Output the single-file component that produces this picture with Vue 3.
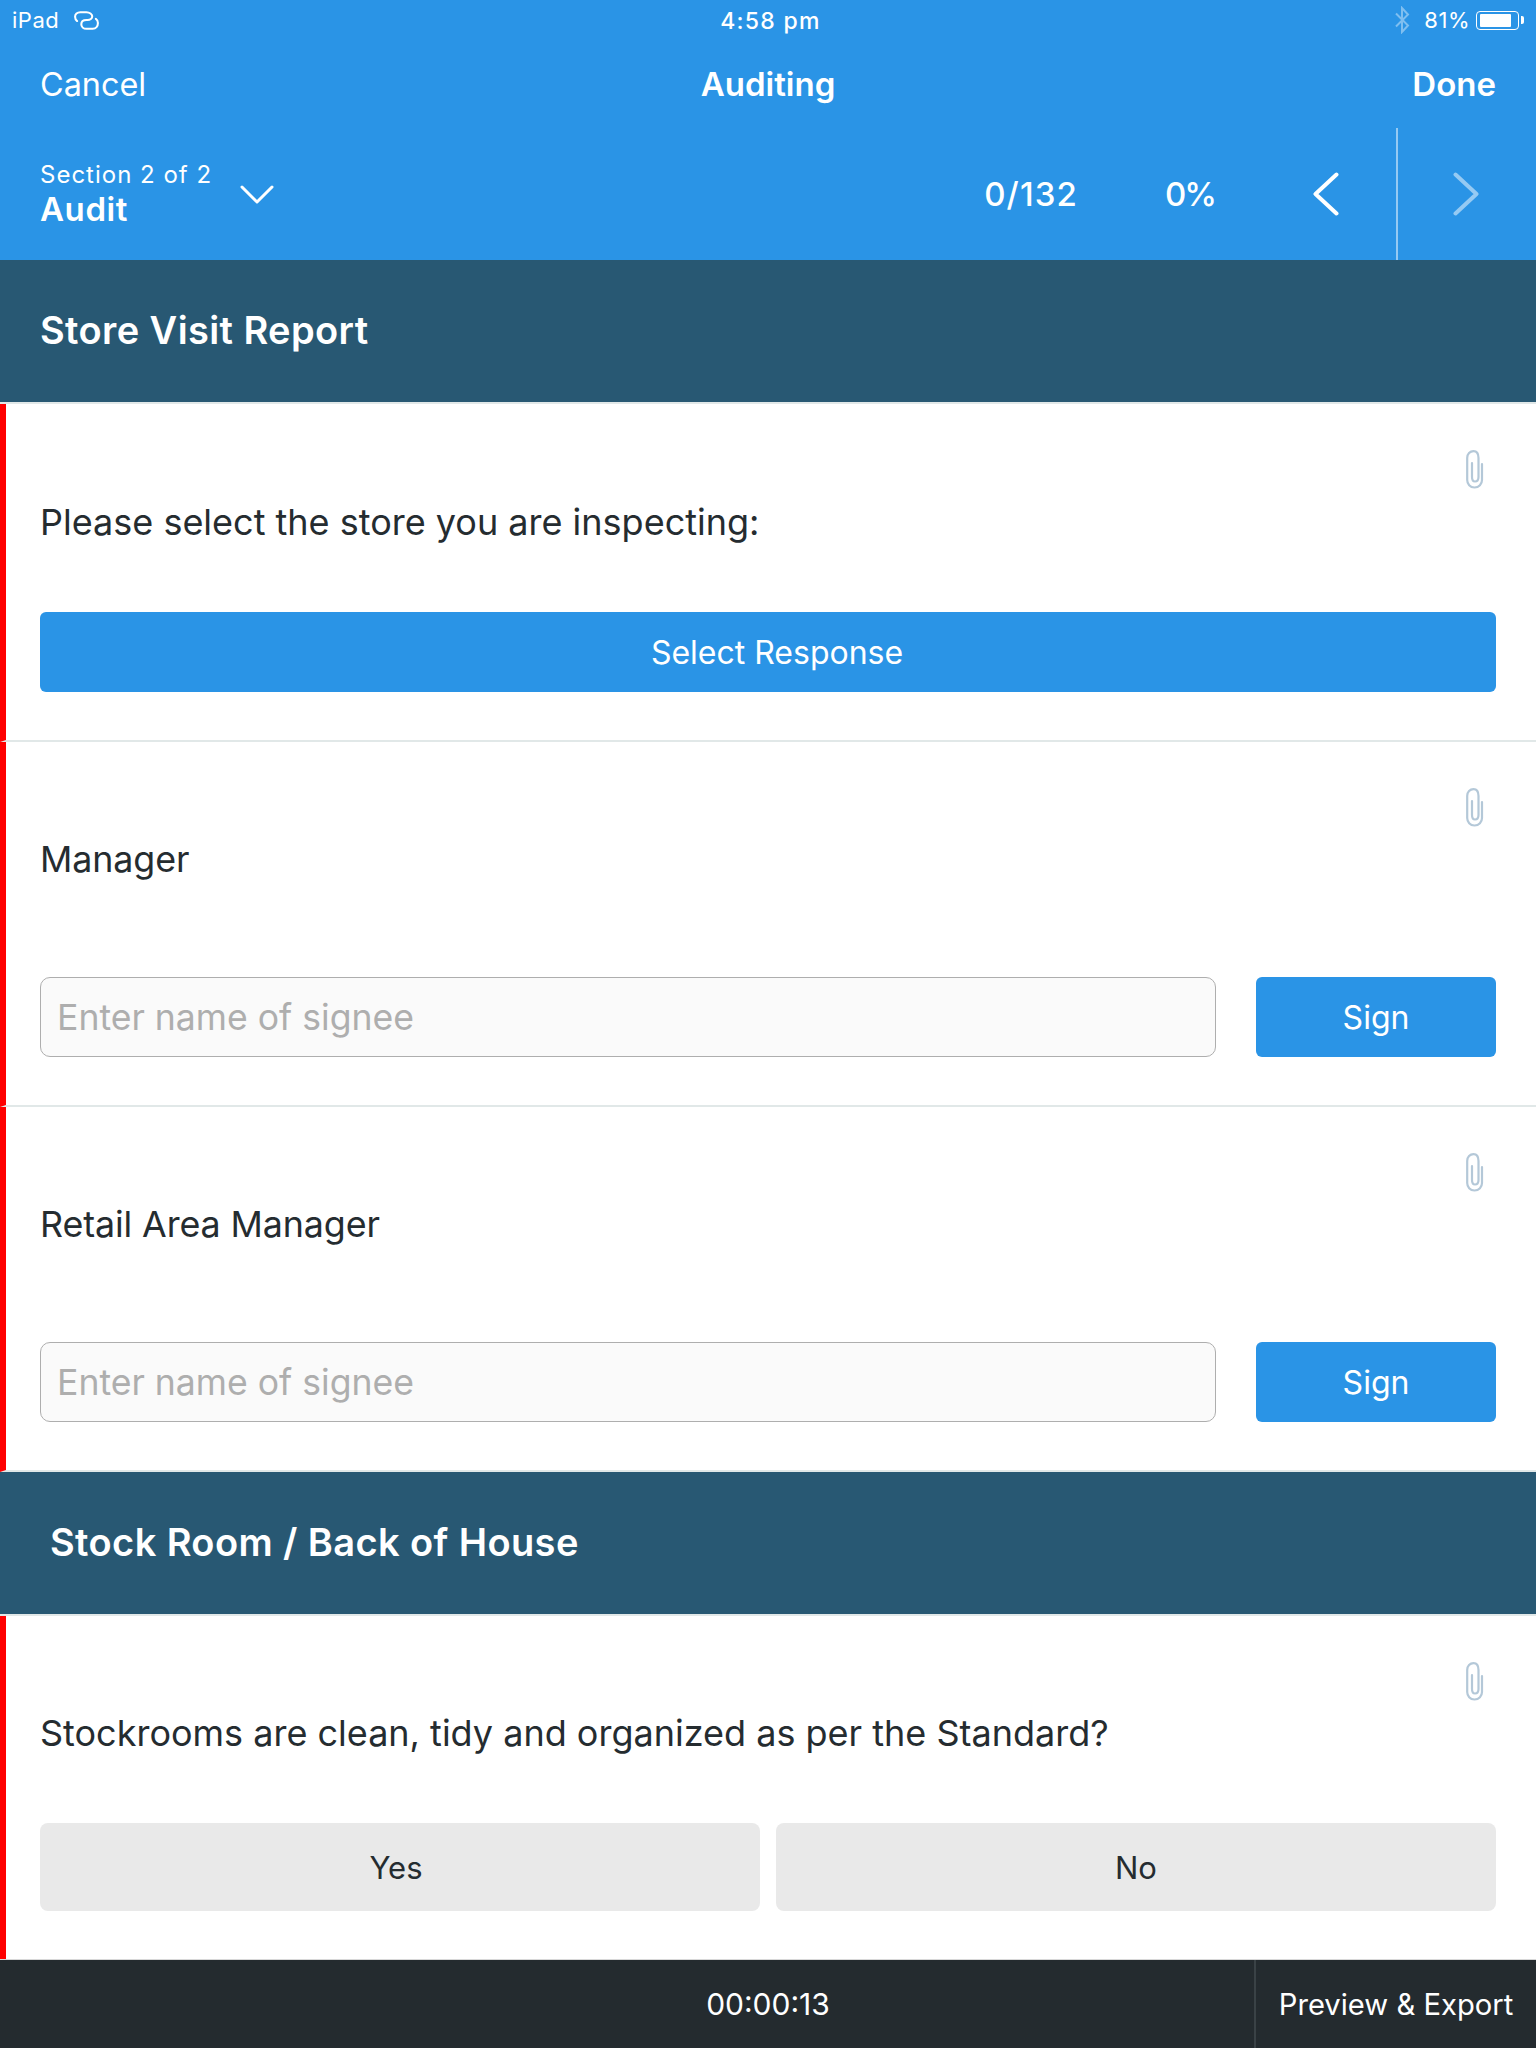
<script setup>
</script>

<template>
  <div class="page">
    <header class="top">
      <div class="status">
        <div class="status-left">
          <span>iPad</span>
          <svg class="link" viewBox="0 0 26 20" width="27" height="21" fill="none" stroke="#fff" stroke-width="2" stroke-linecap="round">
            <path d="M4 10.500C2.500 9.500 2 8 2 6.500C2 4 4 2 7 2H13C16 2 18.500 4 18.500 6C18.500 8 16.500 9.500 14 9.500H13C10 9.500 8 11 8 13.500C8 16 10 18 13 18H19C22 18 24 15.500 24 12.500C24 11 23.500 9.500 22 8.500" />
          </svg>
        </div>
        <div class="status-time">4:58 pm</div>
        <div class="status-right">
          <svg class="bt" viewBox="0 0 16 28" width="16" height="28" fill="none" stroke="#fff" stroke-opacity=".4" stroke-width="2">
            <path d="M2 7.500L14 19.500 8 26V2l6 6.500L2 20.500" />
          </svg>
          <span>81%</span>
          <span class="battery"><span class="battery-fill"></span></span>
          <span class="battery-tip"></span>
        </div>
      </div>
      <div class="nav">
        <span class="cancel">Cancel</span>
        <span class="title">Auditing</span>
        <span class="done">Done</span>
      </div>
      <div class="sub">
        <div class="sec">
          <div class="sec-small">Section 2 of 2</div>
          <div class="sec-big">Audit</div>
        </div>
        <svg class="caret" viewBox="0 0 34 20" width="34" height="20" fill="none" stroke="#fff" stroke-width="3" stroke-linecap="round" stroke-linejoin="round">
          <path d="M2 2l15 15L32 2" />
        </svg>
        <div class="stats">
          <span class="count">0/132</span>
          <span class="pct">0%</span>
        </div>
        <div class="arrow arrow-prev">
          <svg viewBox="0 0 26 44" width="26" height="44" fill="none" stroke="#fff" stroke-width="4" stroke-linecap="round" stroke-linejoin="round"><path d="M23.500 2.500L2.500 22l21 19.500" /></svg>
        </div>
        <div class="arrow arrow-next">
          <svg viewBox="0 0 26 44" width="26" height="44" fill="none" stroke="#fff" stroke-opacity=".5" stroke-width="4" stroke-linecap="round" stroke-linejoin="round"><path d="M2.500 2.500L23.500 22l-21 19.500" /></svg>
        </div>
      </div>
    </header>

    <div class="band">Store Visit Report</div>

    <section class="item item-a">
      <svg class="clip" viewBox="0 0 18 40" width="18" height="40" fill="none" stroke="#b4c8d8" stroke-width="2.200" stroke-linecap="round"><path d="M16 14V30C16 34 13 37.500 8.500 37.500S1.200 34 1.200 30V8C1.200 4 4 1.200 7.500 1.200S12.500 4 12.500 8V27C12.500 30 11 31.500 9 31.500S6 30 6 27V13" /></svg>
      <p class="q q-a">Please select the store you are inspecting:</p>
      <div class="btn btn-full">Select Response</div>
    </section>

    <section class="item item-b">
      <svg class="clip" viewBox="0 0 18 40" width="18" height="40" fill="none" stroke="#b4c8d8" stroke-width="2.200" stroke-linecap="round"><path d="M16 14V30C16 34 13 37.500 8.500 37.500S1.200 34 1.200 30V8C1.200 4 4 1.200 7.500 1.200S12.500 4 12.500 8V27C12.500 30 11 31.500 9 31.500S6 30 6 27V13" /></svg>
      <p class="q q-b">Manager</p>
      <div class="sign-row">
        <div class="input">Enter name of signee</div>
        <div class="btn btn-sign">Sign</div>
      </div>
    </section>

    <section class="item item-b">
      <svg class="clip" viewBox="0 0 18 40" width="18" height="40" fill="none" stroke="#b4c8d8" stroke-width="2.200" stroke-linecap="round"><path d="M16 14V30C16 34 13 37.500 8.500 37.500S1.200 34 1.200 30V8C1.200 4 4 1.200 7.500 1.200S12.500 4 12.500 8V27C12.500 30 11 31.500 9 31.500S6 30 6 27V13" /></svg>
      <p class="q q-b">Retail Area Manager</p>
      <div class="sign-row">
        <div class="input">Enter name of signee</div>
        <div class="btn btn-sign">Sign</div>
      </div>
    </section>

    <div class="band band-2">Stock Room / Back of House</div>

    <section class="item item-c">
      <svg class="clip" viewBox="0 0 18 40" width="18" height="40" fill="none" stroke="#b4c8d8" stroke-width="2.200" stroke-linecap="round"><path d="M16 14V30C16 34 13 37.500 8.500 37.500S1.200 34 1.200 30V8C1.200 4 4 1.200 7.500 1.200S12.500 4 12.500 8V27C12.500 30 11 31.500 9 31.500S6 30 6 27V13" /></svg>
      <p class="q q-c">Stockrooms are clean, tidy and organized as per the Standard?</p>
      <div class="yn">
        <div class="choice choice-yes">Yes</div>
        <div class="choice">No</div>
      </div>
    </section>

    <footer class="foot">
      <div class="timer">00:00:13</div>
      <div class="export">Preview &amp; Export</div>
    </footer>
  </div>
</template>

<style scoped>
.page {
  width: 1536px;
  height: 2048px;
  display: flex;
  flex-direction: column;
  background: #fff;
  font-family: Inter, "Liberation Sans", sans-serif;
  color: #252c30;
  overflow: hidden;
}
.top {
  height: 260px;
  background: #2a94e6;
  color: #fff;
  flex: none;
}
.status {
  height: 40px;
  display: flex;
  align-items: center;
  padding: 0 12px 0 12px;
  font-size: 22px;
  letter-spacing: .5px;
}
.status-left {
  display: flex;
  align-items: center;
  gap: 14px;
  flex: 1;
}
.status-time {
  font-weight: 500;
  font-size: 23px;
  letter-spacing: 1.300px;
  margin: 1px 0 0 5px;
}
.status-right {
  flex: 1;
  display: flex;
  align-items: center;
  justify-content: flex-end;
}
.bt { margin-right: 14px; }
.battery {
  width: 43px;
  height: 19px;
  border: 1.500px solid #fff;
  border-radius: 4px;
  padding: 2px 3px;
  margin-left: 6px;
  box-sizing: border-box;
  display: flex;
}
.battery-fill { width: 31px; background: #fff; border-radius: 1px; }
.battery-tip { width: 3px; height: 8px; background: #fff; margin-left: 2px; border-radius: 0 2px 2px 0; }
.nav {
  height: 88px;
  display: flex;
  align-items: center;
  justify-content: space-between;
  padding: 0 40px;
  font-size: 33px;
  position: relative;
}
.cancel { font-size: 32.400px; }
.title {
  font-weight: 600;
  position: absolute;
  left: 0;
  right: 0;
  text-align: center;
}
.done { font-weight: 600; }
.sub {
  height: 132px;
  display: flex;
  align-items: center;
  padding-left: 40px;
}
.sec-small { font-size: 24px; line-height: 30px; letter-spacing: 1px; }
.sec-big { font-size: 33px; font-weight: 600; line-height: 38px; letter-spacing: .6px; }
.caret { margin-left: 28px; margin-top: 2px; }
.stats {
  margin-left: auto;
  display: flex;
  font-size: 33px;
  font-weight: 500;
  margin-right: 70px;
  gap: 87px;
}
.count { letter-spacing: 1.100px; }
.pct { letter-spacing: -2px; }
.arrow {
  height: 132px;
  display: flex;
  align-items: center;
  justify-content: center;
}
.arrow-prev { width: 82px; padding-right: 29px; border-right: 2px solid rgba(255,255,255,.5); }
.arrow-next { width: 135px; padding-right: 3px; }
.band {
  height: 142px;
  flex: none;
  box-sizing: border-box;
  background: #285873;
  color: #fff;
  display: flex;
  align-items: center;
  padding-left: 40px;
  padding-bottom: 2px;
  font-size: 38px;
  font-weight: 600;
  letter-spacing: .4px;
  line-height: 44px;
  margin-bottom: 2px;
  box-shadow: 0 2px 0 #e1e8e8;
}
.band-2 { padding-left: 50px; }
.item {
  position: relative;
  flex: none;
  box-sizing: border-box;
  padding: 0 40px 0 34px;
  border-left: 6px solid #f00;
  border-bottom: 2px solid #e1e8e8;
  display: flex;
  flex-direction: column;
}
.item-a { height: 338px; }
.item-b { height: 365px; }
.item-c { height: 343px; border-bottom: 0; }
.clip {
  position: absolute;
  right: 52px;
  top: 46px;
}
.q {
  margin: 0;
  font-size: 36px;
  line-height: 44px;
}
.q-a { margin-top: 96px; }
.q-b { margin-top: 95px; font-size: 35.800px; letter-spacing: -.1px; }
.q-c { margin-top: 95px; }
.btn {
  background: #2a94e6;
  color: #fff;
  border-radius: 6px;
  display: flex;
  align-items: center;
  justify-content: center;
  font-size: 32px;
  height: 80px;
}
.btn-full { margin-top: 68px; padding-left: 18px; }
.sign-row {
  margin-top: 96px;
  display: flex;
  gap: 40px;
}
.input {
  flex: 1;
  height: 80px;
  box-sizing: border-box;
  border: 1px solid #aeaeae;
  border-radius: 10px;
  background: #fafafa;
  color: #aeaeae;
  font-size: 35.600px;
  display: flex;
  align-items: center;
  padding-left: 16px;
}
.btn-sign { width: 240px; font-size: 32px; }
.yn {
  margin-top: 68px;
  display: grid;
  grid-template-columns: 1fr 1fr;
  gap: 16px;
}
.choice {
  height: 88px;
  background: #e9e9e9;
  border-radius: 8px;
  display: flex;
  align-items: center;
  justify-content: center;
  font-size: 31px;
  color: #252c30;
}
.choice-yes { padding-right: 8px; }
.foot {
  height: 89px;
  flex: none;
  background: #242b2f;
  color: #fff;
  display: flex;
  align-items: center;
  position: relative;
  justify-content: center;
  font-size: 30px;
  border-top: 1px solid #d8d8d8;
  box-sizing: border-box;
}
.export {
  position: absolute;
  right: 0;
  top: 0;
  bottom: 0;
  width: 282px;
  box-sizing: border-box;
  border-left: 2px solid #3a4246;
  display: flex;
  align-items: center;
  justify-content: center;
  font-size: 29.200px;
}
</style>
